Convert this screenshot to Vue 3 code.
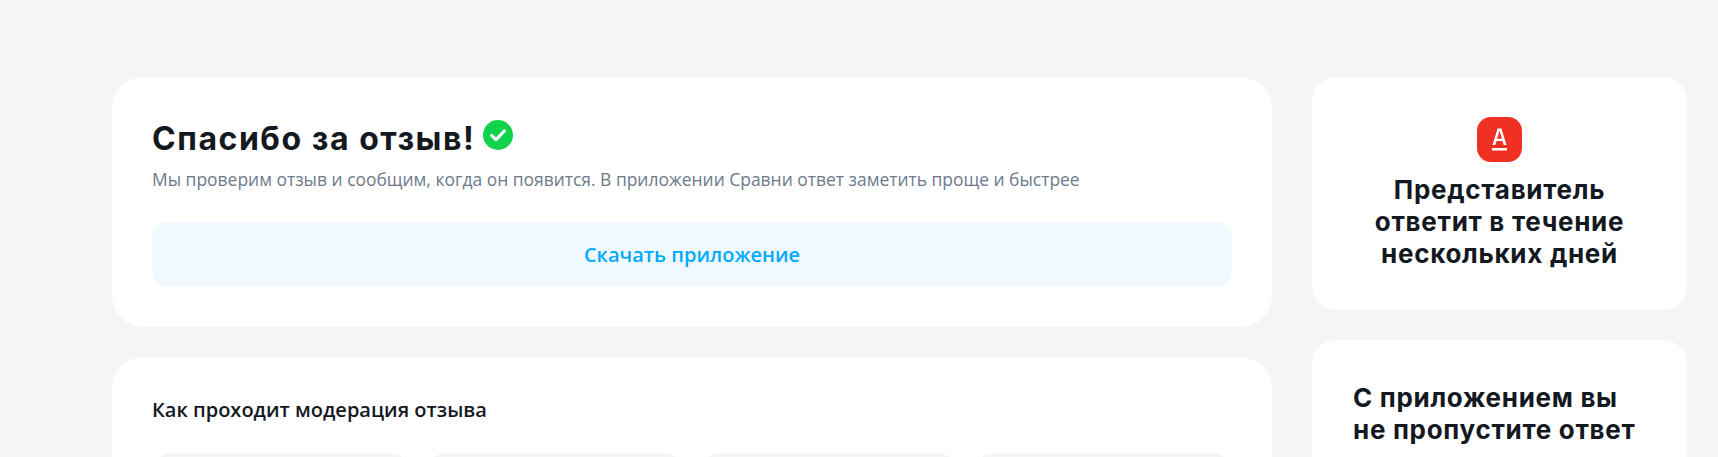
<script setup>
const steps = [1, 2, 3, 4];
</script>

<template>
  <div class="page">
    <main class="main">
      <section class="card thanks">
        <div class="thanks-head">
          <h1 class="thanks-title">Спасибо за отзыв!</h1>
          <svg class="check" viewBox="0 0 30 30" aria-hidden="true">
            <circle cx="15" cy="15" r="15" fill="#12d14b" />
            <path d="M8.6 15.4l4.4 4.2 8.4-8.6" fill="none" stroke="#fff" stroke-width="3.2" stroke-linecap="round" stroke-linejoin="round" />
          </svg>
        </div>
        <p class="thanks-text">Мы проверим отзыв и сообщим, когда он появится. В приложении Сравни ответ заметить проще и быстрее</p>
        <button class="download" type="button">Скачать приложение</button>
      </section>

      <section class="card moderation">
        <h2 class="moderation-title">Как проходит модерация отзыва</h2>
        <div class="steps">
          <div v-for="step in steps" :key="step" class="step"></div>
        </div>
      </section>
    </main>

    <aside class="side">
      <section class="side-card agent">
        <svg class="bank-logo" viewBox="0 0 45 45" aria-hidden="true">
          <rect width="45" height="45" rx="14" fill="#f13024" />
          <rect x="15" y="31" width="15" height="2.5" fill="#fff" />
          <path d="M15.5 28l5.1-16.5h3.8L29.5 28h-2.8l-1.2-4h-6l-1.2 4zM20 21.7h5l-2.4-7.8h-.2z" fill="#fff" fill-rule="evenodd" />
        </svg>
        <h3 class="side-title centered">Представитель ответит в&nbsp;течение нескольких дней</h3>
      </section>
      <section class="side-card app">
        <h3 class="side-title">С приложением вы<br />не пропустите ответ</h3>
      </section>
    </aside>
  </div>
</template>

<style>
html,
body {
  margin: 0;
  height: 457px;
  overflow: hidden;
  background: #f6f5f3;
}
</style>

<style scoped>
.page {
  display: flex;
  gap: 40px;
  padding: 77px 31px 0 112px;
  height: 380px;
  overflow: hidden;
  background: #f6f5f3;
  font-family: "Open Sans", sans-serif;
}

.main {
  width: 1160px;
  flex-shrink: 0;
}

.card {
  background: #fff;
  border-radius: 32px;
  padding: 40px;
}

.thanks {
  height: 250px;
  box-sizing: border-box;
  margin-bottom: 30px;
}

.thanks-head {
  display: flex;
  align-items: flex-start;
  gap: 8px;
  height: 40px;
}

.thanks-title {
  margin: 2px 0 0;
  font-family: Inter, sans-serif;
  font-size: 32px;
  line-height: 40px;
  font-weight: 700;
  letter-spacing: 1.55px;
  color: #14181f;
}

.check {
  width: 30px;
  height: 30px;
  margin-top: 3px;
}

.thanks-text {
  margin: 10px 0 0;
  font-size: 17.45px;
  line-height: 24px;
  color: #6d7a8c;
}

.download {
  display: block;
  width: 100%;
  height: 65px;
  margin-top: 31px;
  border: 0;
  border-radius: 16px;
  background: #f0f9ff;
  font-family: inherit;
  font-size: 20px;
  font-weight: 600;
  color: #00aaff;
}

.moderation-title {
  margin: 0;
  font-size: 20px;
  line-height: 26px;
  font-weight: 600;
  color: #14181f;
}

.steps {
  display: grid;
  grid-template-columns: repeat(4, 1fr);
  gap: 16px;
  margin-top: 30px;
}

.step {
  height: 120px;
  border-radius: 20px;
  background: #f6f5f3;
}

.side {
  width: 375px;
  flex-shrink: 0;
}

.side-card {
  background: #fff;
  border-radius: 24px;
  box-sizing: border-box;
}

.agent {
  height: 233px;
  margin-bottom: 30px;
  padding: 40px 20px 0;
  display: flex;
  flex-direction: column;
  align-items: center;
}

.bank-logo {
  width: 45px;
  height: 45px;
  margin-bottom: 12px;
}

.app {
  height: 200px;
  padding: 42px 41px 0;
}

.side-title {
  margin: 0;
  font-family: Inter, sans-serif;
  font-size: 26px;
  line-height: 32px;
  font-weight: 700;
  letter-spacing: 0.7px;
  color: #14181f;
}

.centered {
  text-align: center;
  width: 300px;
}
</style>
